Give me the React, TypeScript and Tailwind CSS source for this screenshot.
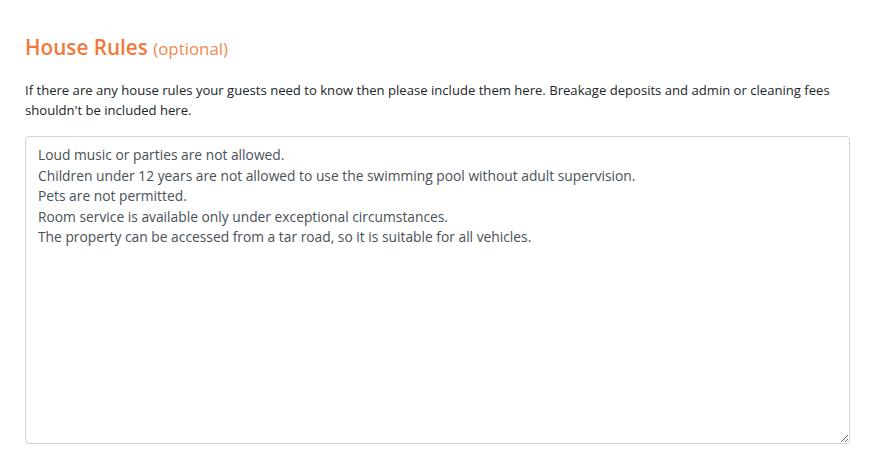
import React, { useState } from 'react';

const defaultRules = [
  'Loud music or parties are not allowed.',
  'Children under 12 years are not allowed to use the swimming pool without adult supervision.',
  'Pets are not permitted.',
  'Room service is available only under exceptional circumstances.',
  'The property can be accessed from a tar road, so it is suitable for all vehicles.',
].join('\n');

const App = () => {
  const [rules, setRules] = useState(defaultRules);

  return (
    <div className="bg-white min-h-[473px] px-[25px] pt-[33px] font-['Open_Sans',sans-serif]">
      <h2 className="text-[20.7px] leading-[28px] font-semibold text-[#ef7a3a]">
        House Rules <span className="text-[16.9px] font-normal text-[#f0894f]">(optional)</span>
      </h2>
      <p className="mt-[17px] text-[13.1px] leading-[20px] text-[#212529]">
        If there are any house rules your guests need to know then please include them here. Breakage deposits and admin or cleaning fees shouldn't be included here.
      </p>
      <textarea
        value={rules}
        onChange={(e) => setRules(e.target.value)}
        className="mt-[16px] block w-[825px] h-[308px] border border-[#ced4da] rounded-[4px] px-[12px] py-[8px] text-[13.8px] leading-[20.5px] text-[#495057] outline-none font-['Open_Sans',sans-serif]"
      />
    </div>
  );
};

export default App;
